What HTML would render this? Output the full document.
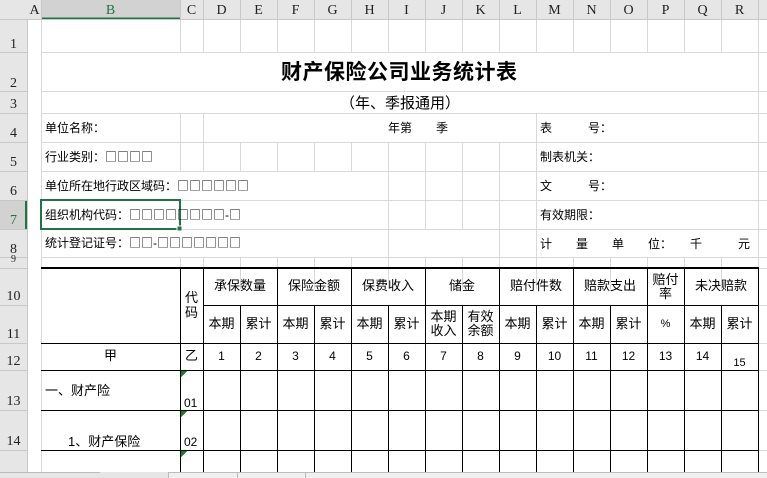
<!DOCTYPE html>
<html><head><meta charset="utf-8"><style>
*{margin:0;padding:0;box-sizing:border-box}
body{width:767px;height:478px;overflow:hidden;background:#fff;position:relative;font-family:"Liberation Sans","Noto Sans CJK SC",sans-serif;font-size:12px;color:#000}
.t{position:absolute;white-space:nowrap;line-height:1}
.b{font-family:"Noto Sans CJK SC",sans-serif}
.c{position:absolute;text-align:center;white-space:nowrap;line-height:1.1;display:flex;align-items:center;justify-content:center}
.h{position:absolute;font-family:"Liberation Serif","Noto Serif CJK SC",serif;font-size:14px;color:#222;text-align:center;line-height:1}
svg{position:absolute;left:0;top:0}
</style></head><body>
<svg width="767" height="478" shape-rendering="crispEdges">
<rect x="0" y="0" width="767" height="20" fill="#e6e6e6"/>
<rect x="41" y="0" width="139" height="20" fill="#d2d2d2"/>
<line x1="41" y1="18.5" x2="180" y2="18.5" stroke="#217346" stroke-width="2"/>
<line x1="0" y1="19.5" x2="767" y2="19.5" stroke="#c8c8c8"/>
<rect x="0" y="20" width="27" height="452" fill="#e6e6e6"/>
<rect x="0" y="200" width="27" height="29" fill="#d2d2d2"/>
<line x1="26" y1="200" x2="26" y2="229" stroke="#217346" stroke-width="2"/>
<line x1="27.5" y1="20" x2="27.5" y2="472" stroke="#c8c8c8"/>
<g stroke="#c8c8c8">
<line x1="0" y1="52.5" x2="27" y2="52.5"/><line x1="0" y1="91.5" x2="27" y2="91.5"/><line x1="0" y1="113.5" x2="27" y2="113.5"/><line x1="0" y1="142.5" x2="27" y2="142.5"/><line x1="0" y1="171.5" x2="27" y2="171.5"/><line x1="0" y1="200.5" x2="27" y2="200.5"/><line x1="0" y1="229.5" x2="27" y2="229.5"/><line x1="0" y1="257.5" x2="27" y2="257.5"/><line x1="0" y1="268.5" x2="27" y2="268.5"/><line x1="0" y1="305.5" x2="27" y2="305.5"/><line x1="0" y1="343.5" x2="27" y2="343.5"/><line x1="0" y1="370.5" x2="27" y2="370.5"/><line x1="0" y1="410.5" x2="27" y2="410.5"/><line x1="0" y1="450.5" x2="27" y2="450.5"/>
<line x1="41.5" y1="0" x2="41.5" y2="20"/><line x1="180.5" y1="0" x2="180.5" y2="20"/><line x1="203.5" y1="0" x2="203.5" y2="20"/><line x1="240.5" y1="0" x2="240.5" y2="20"/><line x1="277.5" y1="0" x2="277.5" y2="20"/><line x1="314.5" y1="0" x2="314.5" y2="20"/><line x1="351.5" y1="0" x2="351.5" y2="20"/><line x1="388.5" y1="0" x2="388.5" y2="20"/><line x1="425.5" y1="0" x2="425.5" y2="20"/><line x1="462.5" y1="0" x2="462.5" y2="20"/><line x1="499.5" y1="0" x2="499.5" y2="20"/><line x1="536.5" y1="0" x2="536.5" y2="20"/><line x1="573.5" y1="0" x2="573.5" y2="20"/><line x1="610.5" y1="0" x2="610.5" y2="20"/><line x1="647.5" y1="0" x2="647.5" y2="20"/><line x1="684.5" y1="0" x2="684.5" y2="20"/><line x1="721.5" y1="0" x2="721.5" y2="20"/><line x1="758.5" y1="0" x2="758.5" y2="20"/>
</g>
<g stroke="#d9d9d9">
<line x1="41.5" y1="20" x2="41.5" y2="472"/>
<line x1="758.5" y1="20" x2="758.5" y2="268"/>
<g id="r1">
<line x1="180.5" y1="20" x2="180.5" y2="52"/><line x1="203.5" y1="20" x2="203.5" y2="52"/><line x1="240.5" y1="20" x2="240.5" y2="52"/><line x1="277.5" y1="20" x2="277.5" y2="52"/><line x1="314.5" y1="20" x2="314.5" y2="52"/><line x1="351.5" y1="20" x2="351.5" y2="52"/><line x1="388.5" y1="20" x2="388.5" y2="52"/><line x1="425.5" y1="20" x2="425.5" y2="52"/><line x1="462.5" y1="20" x2="462.5" y2="52"/><line x1="499.5" y1="20" x2="499.5" y2="52"/><line x1="536.5" y1="20" x2="536.5" y2="52"/><line x1="573.5" y1="20" x2="573.5" y2="52"/><line x1="610.5" y1="20" x2="610.5" y2="52"/><line x1="647.5" y1="20" x2="647.5" y2="52"/><line x1="684.5" y1="20" x2="684.5" y2="52"/><line x1="721.5" y1="20" x2="721.5" y2="52"/>
</g>
<use href="#r1" transform="translate(0,237)" />
<line x1="180.5" y1="113" x2="180.5" y2="171"/><line x1="203.5" y1="113" x2="203.5" y2="171"/><line x1="536.5" y1="113" x2="536.5" y2="257"/>
<line x1="240.5" y1="142" x2="240.5" y2="171"/><line x1="277.5" y1="142" x2="277.5" y2="171"/><line x1="314.5" y1="142" x2="314.5" y2="171"/><line x1="351.5" y1="142" x2="351.5" y2="171"/>
<line x1="388.5" y1="142" x2="388.5" y2="257"/><line x1="425.5" y1="142" x2="425.5" y2="229"/><line x1="462.5" y1="142" x2="462.5" y2="229"/><line x1="499.5" y1="142" x2="499.5" y2="257"/>
<line x1="41" y1="52.5" x2="767" y2="52.5"/><line x1="41" y1="91.5" x2="767" y2="91.5"/><line x1="41" y1="113.5" x2="767" y2="113.5"/><line x1="41" y1="142.5" x2="767" y2="142.5"/><line x1="41" y1="171.5" x2="767" y2="171.5"/><line x1="41" y1="200.5" x2="767" y2="200.5"/><line x1="41" y1="229.5" x2="767" y2="229.5"/><line x1="41" y1="257.5" x2="767" y2="257.5"/>
<line x1="758" y1="268.5" x2="767" y2="268.5"/><line x1="758" y1="305.5" x2="767" y2="305.5"/><line x1="758" y1="343.5" x2="767" y2="343.5"/><line x1="758" y1="370.5" x2="767" y2="370.5"/><line x1="758" y1="410.5" x2="767" y2="410.5"/><line x1="758" y1="450.5" x2="767" y2="450.5"/>
</g>
<g stroke="#000">
<line x1="41" y1="268" x2="759" y2="268" stroke-width="2"/>
<line x1="203" y1="305.5" x2="759" y2="305.5"/>
<line x1="41" y1="343.5" x2="759" y2="343.5"/><line x1="41" y1="370.5" x2="759" y2="370.5"/><line x1="41" y1="410.5" x2="759" y2="410.5"/><line x1="41" y1="450.5" x2="759" y2="450.5"/>
<line x1="180.5" y1="268" x2="180.5" y2="472"/><line x1="203.5" y1="268" x2="203.5" y2="472"/><line x1="277.5" y1="268" x2="277.5" y2="472"/><line x1="351.5" y1="268" x2="351.5" y2="472"/><line x1="425.5" y1="268" x2="425.5" y2="472"/><line x1="499.5" y1="268" x2="499.5" y2="472"/><line x1="573.5" y1="268" x2="573.5" y2="472"/><line x1="647.5" y1="268" x2="647.5" y2="472"/><line x1="684.5" y1="268" x2="684.5" y2="472"/><line x1="758.5" y1="268" x2="758.5" y2="472"/>
<line x1="240.5" y1="305" x2="240.5" y2="472"/><line x1="314.5" y1="305" x2="314.5" y2="472"/><line x1="388.5" y1="305" x2="388.5" y2="472"/><line x1="462.5" y1="305" x2="462.5" y2="472"/><line x1="536.5" y1="305" x2="536.5" y2="472"/><line x1="610.5" y1="305" x2="610.5" y2="472"/><line x1="721.5" y1="305" x2="721.5" y2="472"/>
</g>
<polygon points="181,371 187,371 181,377" fill="#1e7a1e"/>
<polygon points="181,411 187,411 181,417" fill="#1e7a1e"/>
<polygon points="181,451 187,451 181,457" fill="#1e7a1e"/>
<rect x="41" y="200" width="139" height="29" fill="none" stroke="#217346" stroke-width="2"/>
<rect x="177" y="226" width="5" height="5" fill="#217346" stroke="#fff"/>
<rect x="0" y="472" width="767" height="6" fill="#e6e6e6"/>
<line x1="0" y1="472.5" x2="100" y2="472.5" stroke="#bbb"/>
<rect x="168.5" y="472.5" width="600" height="6" fill="#f0f0f0" stroke="#bbb"/>
<line x1="237.5" y1="472" x2="237.5" y2="478" stroke="#bbb"/><line x1="305.5" y1="472" x2="305.5" y2="478" stroke="#bbb"/>
</svg>
<div class="h" style="left:28px;top:4px;width:13px">A</div>
<div class="h" style="left:41px;top:4px;width:139px;color:#217346">B</div>
<div class="h" style="left:180px;top:4px;width:23px">C</div>
<div class="h" style="left:203px;top:4px;width:37px">D</div>
<div class="h" style="left:240px;top:4px;width:37px">E</div>
<div class="h" style="left:277px;top:4px;width:37px">F</div>
<div class="h" style="left:314px;top:4px;width:37px">G</div>
<div class="h" style="left:351px;top:4px;width:37px">H</div>
<div class="h" style="left:388px;top:4px;width:37px">I</div>
<div class="h" style="left:425px;top:4px;width:37px">J</div>
<div class="h" style="left:462px;top:4px;width:37px">K</div>
<div class="h" style="left:499px;top:4px;width:37px">L</div>
<div class="h" style="left:536px;top:4px;width:37px">M</div>
<div class="h" style="left:573px;top:4px;width:37px">N</div>
<div class="h" style="left:610px;top:4px;width:37px">O</div>
<div class="h" style="left:647px;top:4px;width:37px">P</div>
<div class="h" style="left:684px;top:4px;width:37px">Q</div>
<div class="h" style="left:721px;top:4px;width:37px">R</div>
<div class="h" style="left:0;top:38px;width:27px">1</div>
<div class="h" style="left:0;top:77px;width:27px">2</div>
<div class="h" style="left:0;top:98px;width:27px">3</div>
<div class="h" style="left:0;top:127px;width:27px">4</div>
<div class="h" style="left:0;top:156px;width:27px">5</div>
<div class="h" style="left:0;top:185px;width:27px">6</div>
<div class="h" style="left:0;top:214px;width:27px;color:#217346">7</div>
<div class="h" style="left:0;top:243px;width:27px">8</div>
<div class="h" style="left:0;top:255px;width:27px;font-size:10px">9</div>
<div class="h" style="left:0;top:290px;width:27px">10</div>
<div class="h" style="left:0;top:328px;width:27px">11</div>
<div class="h" style="left:0;top:355px;width:27px">12</div>
<div class="h" style="left:0;top:395px;width:27px">13</div>
<div class="h" style="left:0;top:435px;width:27px">14</div>
<div class="t" style="left:281px;top:62px;font-size:21px;font-weight:bold;letter-spacing:0.5px">财产保险公司业务统计表</div>
<div class="t" style="left:340px;top:96px;font-size:15px">（年、季报通用）</div>
<div class="t" style="left:45px;top:122px">单位名称：</div>
<div class="t" style="left:388px;top:122px">年第　　季</div>
<div class="t" style="left:540px;top:122px">表　　　号：</div>
<div class="t" style="left:45px;top:151px">行业类别：<span class="b">□□□□</span></div>
<div class="t" style="left:540px;top:151px">制表机关：</div>
<div class="t" style="left:45px;top:180px">单位所在地行政区域码：<span class="b">□□□□□□</span></div>
<div class="t" style="left:540px;top:180px">文　　　号：</div>
<div class="t" style="left:45px;top:209px">组织机构代码：<span class="b">□□□□□□□□</span>-<span class="b">□</span></div>
<div class="t" style="left:540px;top:209px">有效期限：</div>
<div class="t" style="left:45px;top:237px">统计登记证号：<span class="b">□□</span>-<span class="b">□□□□□□□</span></div>
<div class="t" style="left:540px;top:238px">计　　量　　单　　位：　　千　　　元</div>
<div class="c" style="left:180px;top:268px;width:23px;height:75px;line-height:1.15;white-space:normal;font-size:13px">代<br>码</div>
<div class="c" style="left:203px;top:268px;width:74px;height:37px;font-size:13px">承保数量</div>
<div class="c" style="left:277px;top:268px;width:74px;height:37px;font-size:13px">保险金额</div>
<div class="c" style="left:351px;top:268px;width:74px;height:37px;font-size:13px">保费收入</div>
<div class="c" style="left:425px;top:268px;width:74px;height:37px;font-size:13px">储金</div>
<div class="c" style="left:499px;top:268px;width:74px;height:37px;font-size:13px">赔付件数</div>
<div class="c" style="left:573px;top:268px;width:74px;height:37px;font-size:13px">赔款支出</div>
<div class="c" style="left:647px;top:268px;width:37px;height:37px;font-size:13px;line-height:1.05;white-space:normal">赔付<br>率</div>
<div class="c" style="left:684px;top:268px;width:74px;height:37px;font-size:13px">未决赔款</div>
<div class="c" style="left:203px;top:305px;width:37px;height:38px;font-size:13px">本期</div>
<div class="c" style="left:240px;top:305px;width:37px;height:38px;font-size:13px">累计</div>
<div class="c" style="left:277px;top:305px;width:37px;height:38px;font-size:13px">本期</div>
<div class="c" style="left:314px;top:305px;width:37px;height:38px;font-size:13px">累计</div>
<div class="c" style="left:351px;top:305px;width:37px;height:38px;font-size:13px">本期</div>
<div class="c" style="left:388px;top:305px;width:37px;height:38px;font-size:13px">累计</div>
<div class="c" style="left:425px;top:305px;width:37px;height:38px;font-size:13px;line-height:1.05;white-space:normal">本期<br>收入</div>
<div class="c" style="left:462px;top:305px;width:37px;height:38px;font-size:13px;line-height:1.05;white-space:normal">有效<br>余额</div>
<div class="c" style="left:499px;top:305px;width:37px;height:38px;font-size:13px">本期</div>
<div class="c" style="left:536px;top:305px;width:37px;height:38px;font-size:13px">累计</div>
<div class="c" style="left:573px;top:305px;width:37px;height:38px;font-size:13px">本期</div>
<div class="c" style="left:610px;top:305px;width:37px;height:38px;font-size:13px">累计</div>
<div class="c" style="left:647px;top:305px;width:37px;height:38px;font-size:11px">%</div>
<div class="c" style="left:684px;top:305px;width:37px;height:38px;font-size:13px">本期</div>
<div class="c" style="left:721px;top:305px;width:37px;height:38px;font-size:13px">累计</div>
<div class="c" style="left:41px;top:343px;width:139px;height:27px;font-size:13px">甲</div>
<div class="c" style="left:180px;top:343px;width:23px;height:27px;font-size:13px">乙</div>
<div class="c" style="left:203px;top:343px;width:37px;height:27px">1</div>
<div class="c" style="left:240px;top:343px;width:37px;height:27px">2</div>
<div class="c" style="left:277px;top:343px;width:37px;height:27px">3</div>
<div class="c" style="left:314px;top:343px;width:37px;height:27px">4</div>
<div class="c" style="left:351px;top:343px;width:37px;height:27px">5</div>
<div class="c" style="left:388px;top:343px;width:37px;height:27px">6</div>
<div class="c" style="left:425px;top:343px;width:37px;height:27px">7</div>
<div class="c" style="left:462px;top:343px;width:37px;height:27px">8</div>
<div class="c" style="left:499px;top:343px;width:37px;height:27px">9</div>
<div class="c" style="left:536px;top:343px;width:37px;height:27px">10</div>
<div class="c" style="left:573px;top:343px;width:37px;height:27px">11</div>
<div class="c" style="left:610px;top:343px;width:37px;height:27px">12</div>
<div class="c" style="left:647px;top:343px;width:37px;height:27px">13</div>
<div class="c" style="left:684px;top:343px;width:37px;height:27px">14</div>
<div class="c" style="left:721px;top:350px;width:37px;height:27px;font-size:11px">15</div>
<div class="t" style="left:45px;top:384px;font-size:13px">一、财产险</div>
<div class="t" style="left:184px;top:397px;font-size:12px">01</div>
<div class="t" style="left:68px;top:435px;font-size:13px">1、财产保险</div>
<div class="t" style="left:184px;top:436px;font-size:12px">02</div>
</body></html>
